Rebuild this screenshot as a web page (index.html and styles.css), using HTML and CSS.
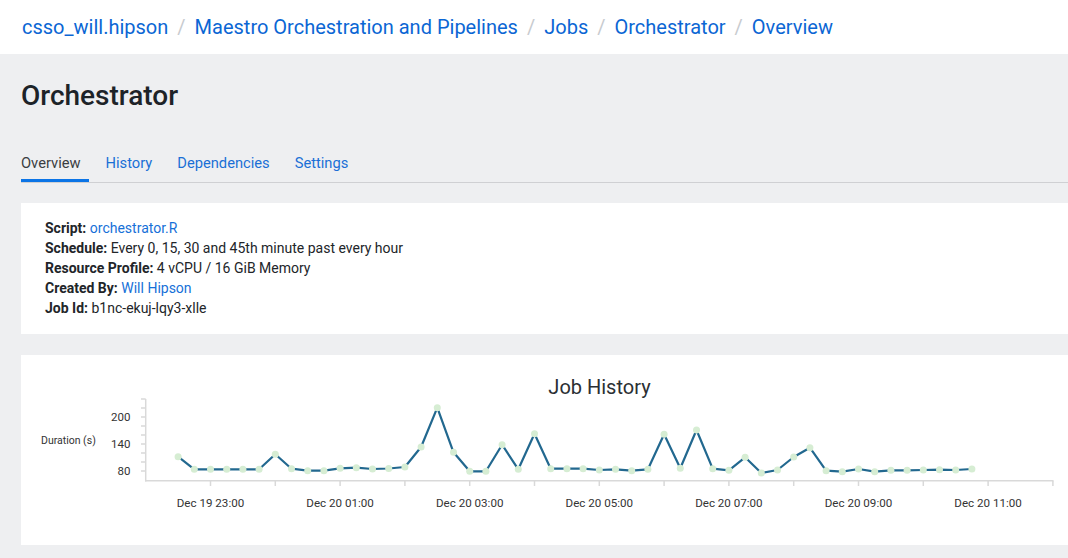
FILE: index.html
```html
<!DOCTYPE html>
<html lang="en">
<head>
<meta charset="utf-8">
<title>Orchestrator - Overview</title>
<link rel="stylesheet" href="styles.css">
</head>
<body>
<header class="topbar">
  <nav class="crumbs">
    <a class="crumb" href="#">csso_will.hipson</a><span class="sep">/</span>
    <a class="crumb" href="#">Maestro Orchestration and Pipelines</a><span class="sep">/</span>
    <a class="crumb" href="#">Jobs</a><span class="sep">/</span>
    <a class="crumb" href="#">Orchestrator</a><span class="sep">/</span>
    <a class="crumb" href="#">Overview</a>
  </nav>
</header>
<main class="page">
  <h1 class="title">Orchestrator</h1>
  <nav class="tabs">
    <a class="tab active" href="#">Overview</a>
    <a class="tab" href="#">History</a>
    <a class="tab" href="#">Dependencies</a>
    <a class="tab" href="#">Settings</a>
  </nav>
  <section class="card info">
    <div class="row"><b>Script:</b> <a class="link" href="#">orchestrator.R</a></div>
    <div class="row"><b>Schedule:</b> Every 0, 15, 30 and 45th minute past every hour</div>
    <div class="row"><b>Resource Profile:</b> 4 vCPU / 16 GiB Memory</div>
    <div class="row"><b>Created By:</b> <a class="link" href="#">Will Hipson</a></div>
    <div class="row"><b>Job Id:</b> b1nc-ekuj-lqy3-xlle</div>
  </section>
  <section class="card chart">
    <svg class="chart-svg" width="1047" height="190" viewBox="21 355 1047 190" xmlns="http://www.w3.org/2000/svg">
      <text class="chart-title" x="599.5" y="394" text-anchor="middle">Job History</text>
      <text class="axis-title" x="41" y="444.3">Duration (s)</text>
      <g class="grid">
        <line x1="145.7" y1="399" x2="145.7" y2="481.5"/>
        <line x1="145" y1="480.7" x2="1053.5" y2="480.7"/>
        <line x1="141" y1="399" x2="145.7" y2="399"/>
        <line x1="141" y1="408" x2="145.7" y2="408"/>
        <line x1="141" y1="417" x2="145.7" y2="417"/>
        <line x1="141" y1="426" x2="145.7" y2="426"/>
        <line x1="141" y1="435" x2="145.7" y2="435"/>
        <line x1="141" y1="444" x2="145.7" y2="444"/>
        <line x1="141" y1="453" x2="145.7" y2="453"/>
        <line x1="141" y1="462" x2="145.7" y2="462"/>
        <line x1="141" y1="471" x2="145.7" y2="471"/>
        <line x1="210.5" y1="480.7" x2="210.5" y2="486"/>
        <line x1="275.3" y1="480.7" x2="275.3" y2="486"/>
        <line x1="340.1" y1="480.7" x2="340.1" y2="486"/>
        <line x1="404.9" y1="480.7" x2="404.9" y2="486"/>
        <line x1="469.7" y1="480.7" x2="469.7" y2="486"/>
        <line x1="534.5" y1="480.7" x2="534.5" y2="486"/>
        <line x1="599.3" y1="480.7" x2="599.3" y2="486"/>
        <line x1="664.1" y1="480.7" x2="664.1" y2="486"/>
        <line x1="728.9" y1="480.7" x2="728.9" y2="486"/>
        <line x1="793.7" y1="480.7" x2="793.7" y2="486"/>
        <line x1="858.5" y1="480.7" x2="858.5" y2="486"/>
        <line x1="923.3" y1="480.7" x2="923.3" y2="486"/>
        <line x1="988.1" y1="480.7" x2="988.1" y2="486"/>
        <line x1="1052.9" y1="480.7" x2="1052.9" y2="486"/>
      </g>
      <g class="ylabels">
        <text x="130.5" y="421">200</text>
        <text x="130.5" y="448">140</text>
        <text x="130.5" y="475">80</text>
      </g>
      <g class="xlabels">
        <text x="210.5" y="507">Dec 19 23:00</text>
        <text x="340.1" y="507">Dec 20 01:00</text>
        <text x="469.7" y="507">Dec 20 03:00</text>
        <text x="599.3" y="507">Dec 20 05:00</text>
        <text x="728.9" y="507">Dec 20 07:00</text>
        <text x="858.5" y="507">Dec 20 09:00</text>
        <text x="988.1" y="507">Dec 20 11:00</text>
      </g>
      <polyline class="series" points="178.1,456.7 194.3,469.3 210.5,469.3 226.7,469.3 242.9,469.3 259.1,469.3 275.3,454.3 291.5,468.7 307.7,470.7 323.9,470.7 340.1,468.3 356.3,467.7 372.5,469 388.7,468.5 404.9,467 421.1,447 437.3,407.7 453.5,452.3 469.7,471.3 485.9,471.3 502.1,444.7 518.3,469.3 534.5,433.7 550.7,468.7 566.9,468.7 583.1,468.7 599.3,470 615.5,469.3 631.7,470.7 647.9,469.3 664.1,434.3 680.3,468.3 696.5,430 712.7,468.7 728.9,470.3 745.1,457.3 761.3,473 777.5,470 793.7,457 809.9,447.7 826.1,470.7 842.3,471.7 858.5,469 874.7,471.7 890.9,470.3 907.1,470.3 923.3,470 939.5,469.7 955.7,470 971.9,469"/>
      <g class="dots">
        <circle cx="178.1" cy="456.7" r="3.5"/><circle cx="194.3" cy="469.3" r="3.5"/><circle cx="210.5" cy="469.3" r="3.5"/><circle cx="226.7" cy="469.3" r="3.5"/><circle cx="242.9" cy="469.3" r="3.5"/>
        <circle cx="259.1" cy="469.3" r="3.5"/><circle cx="275.3" cy="454.3" r="3.5"/><circle cx="291.5" cy="468.7" r="3.5"/><circle cx="307.7" cy="470.7" r="3.5"/><circle cx="323.9" cy="470.7" r="3.5"/>
        <circle cx="340.1" cy="468.3" r="3.5"/><circle cx="356.3" cy="467.7" r="3.5"/><circle cx="372.5" cy="469" r="3.5"/><circle cx="388.7" cy="468.5" r="3.5"/><circle cx="404.9" cy="467" r="3.5"/>
        <circle cx="421.1" cy="447" r="3.5"/><circle cx="437.3" cy="407.7" r="3.5"/><circle cx="453.5" cy="452.3" r="3.5"/><circle cx="469.7" cy="471.3" r="3.5"/><circle cx="485.9" cy="471.3" r="3.5"/>
        <circle cx="502.1" cy="444.7" r="3.5"/><circle cx="518.3" cy="469.3" r="3.5"/><circle cx="534.5" cy="433.7" r="3.5"/><circle cx="550.7" cy="468.7" r="3.5"/><circle cx="566.9" cy="468.7" r="3.5"/>
        <circle cx="583.1" cy="468.7" r="3.5"/><circle cx="599.3" cy="470" r="3.5"/><circle cx="615.5" cy="469.3" r="3.5"/><circle cx="631.7" cy="470.7" r="3.5"/><circle cx="647.9" cy="469.3" r="3.5"/>
        <circle cx="664.1" cy="434.3" r="3.5"/><circle cx="680.3" cy="468.3" r="3.5"/><circle cx="696.5" cy="430" r="3.5"/><circle cx="712.7" cy="468.7" r="3.5"/><circle cx="728.9" cy="470.3" r="3.5"/>
        <circle cx="745.1" cy="457.3" r="3.5"/><circle cx="761.3" cy="473" r="3.5"/><circle cx="777.5" cy="470" r="3.5"/><circle cx="793.7" cy="457" r="3.5"/><circle cx="809.9" cy="447.7" r="3.5"/>
        <circle cx="826.1" cy="470.7" r="3.5"/><circle cx="842.3" cy="471.7" r="3.5"/><circle cx="858.5" cy="469" r="3.5"/><circle cx="874.7" cy="471.7" r="3.5"/><circle cx="890.9" cy="470.3" r="3.5"/>
        <circle cx="907.1" cy="470.3" r="3.5"/><circle cx="923.3" cy="470" r="3.5"/><circle cx="939.5" cy="469.7" r="3.5"/><circle cx="955.7" cy="470" r="3.5"/><circle cx="971.9" cy="469" r="3.5"/>
      </g>
    </svg>
  </section>
</main>
</body>
</html>
```

FILE: styles.css
```css
* { box-sizing: border-box; }

html, body {
  margin: 0;
  padding: 0;
}

body {
  background: #eeeff1;
  font-family: Roboto, "Liberation Sans", Arial, sans-serif;
  color: #212529;
  overflow: hidden;
}

a { text-decoration: none; }

.topbar {
  background: #ffffff;
  height: 54px;
  display: flex;
  align-items: center;
  padding-left: 22px;
}

.crumbs {
  display: flex;
  align-items: center;
  font-size: 20px;
  line-height: 24px;
  white-space: nowrap;
}

.crumb { color: #0b66d4; }

.sep {
  color: #c8cbcf;
  padding: 0 9px;
}

.page {
  padding-left: 21px;
}

.title {
  margin: 0;
  padding-top: 25px;
  font-size: 28px;
  line-height: 34px;
  font-weight: 500;
  color: #1d2328;
}

.tabs {
  display: flex;
  gap: 17px;
  margin-top: 41px;
  border-bottom: 1px solid #cfd0d3;
}

.tab {
  font-size: 14.7px;
  line-height: 18px;
  padding: 0 8px 7px 0;
  border-bottom: 3px solid transparent;
  color: #1a6fd6;
}

.tab.active {
  color: #3a3d41;
  border-bottom-color: #0b74e6;
}

.card {
  background: #ffffff;
}

.info {
  margin-top: 20px;
  padding: 15px 24px 16px;
  font-size: 14px;
  line-height: 20px;
  color: #222529;
}

.info b { font-weight: 700; }

.link { color: #1670d8; }

.chart {
  margin-top: 21px;
  height: 190px;
}

.chart-svg { display: block; }

.chart-title {
  font-size: 20px;
  fill: #2b2f33;
  font-family: Roboto, "Liberation Sans", sans-serif;
}

.axis-title {
  font-size: 10.5px;
  fill: #333;
  font-family: Roboto, "Liberation Sans", sans-serif;
}

.grid line {
  stroke: #d9d9d9;
  stroke-width: 1.5;
}

.ylabels text {
  font-size: 11.5px;
  fill: #333;
  text-anchor: end;
  font-family: Roboto, "Liberation Sans", sans-serif;
}

.xlabels text {
  font-size: 11.6px;
  fill: #333;
  text-anchor: middle;
  font-family: Roboto, "Liberation Sans", sans-serif;
}

.series {
  fill: none;
  stroke: #22688f;
  stroke-width: 2.2;
  stroke-linejoin: round;
}

.dots circle {
  fill: #d6edd3;
}
```
